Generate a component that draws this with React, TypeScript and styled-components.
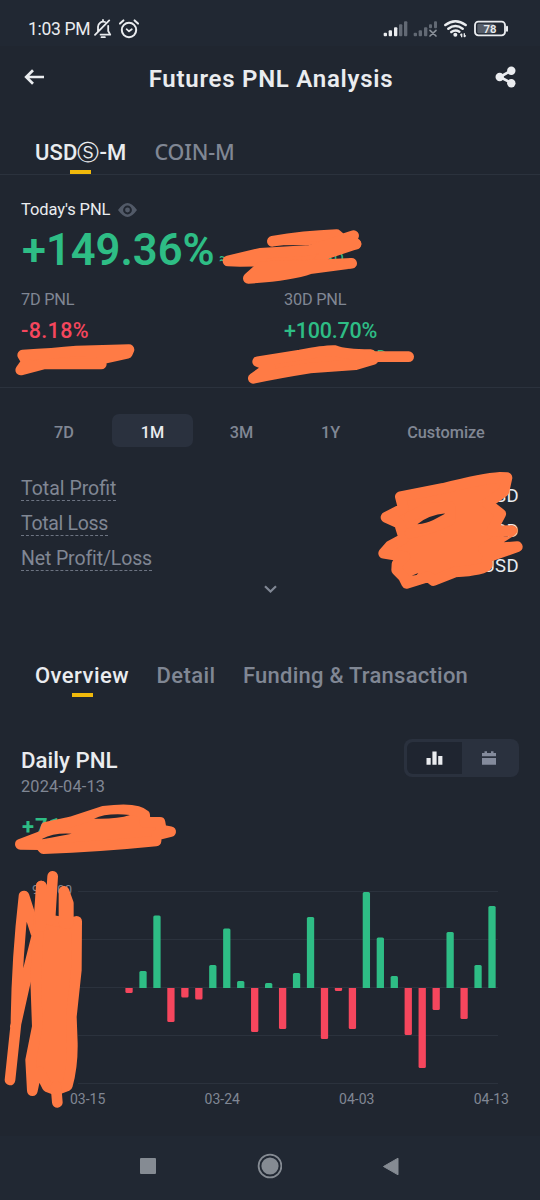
import React from "react";
import styled, { createGlobalStyle } from "styled-components";

const color = {
  bg: "#202630",
  system: "#212833",
  line: "#2b323d",
  text: "#eaecef",
  muted: "#808794",
  green: "#2ebd85",
  red: "#f6465d",
  yellow: "#f0b90b",
  panel: "#2a313e",
  marker: "#ff7b45",
};

const Global = createGlobalStyle`
  * { box-sizing: border-box; }
  body { margin: 0; background: ${color.bg}; }
`;

const Screen = styled.div`
  position: relative;
  width: 540px;
  height: 1200px;
  overflow: hidden;
  display: flex;
  flex-direction: column;
  background: ${color.bg};
  color: ${color.text};
  font-family: Roboto, "Noto Sans", sans-serif;
  white-space: nowrap;

  svg { display: block; flex: none; }
`;

const StatusBar = styled.div`
  height: 46px;
  padding: 12px 30px 0 28px;
  display: flex;
  align-items: center;
  justify-content: space-between;
  background: ${color.system};
`;

const StatusLeft = styled.div`
  display: flex;
  align-items: center;
  gap: 7px;
  font-size: 17.5px;
  letter-spacing: -0.3px;
  line-height: 22px;
`;

const Clock = styled.span`
  width: 59px;
`;

const Header = styled.header`
  height: 66px;
  padding: 0 24px 4px;
  display: flex;
  align-items: center;
  justify-content: space-between;
`;

const Title = styled.h1`
  margin: 0;
  padding: 3px 0 0 2px;
  font-size: 24px;
  font-weight: 600;
  letter-spacing: 0.74px;
`;

const TabBar = styled.nav<{ $top: number; $line?: boolean; $gap: number }>`
  display: flex;
  gap: ${(p) => p.$gap}px;
  padding: ${(p) => p.$top}px 0 0 35px;
  border-bottom: ${(p) => (p.$line ? `1px solid ${color.line}` : "0")};
`;

const TabItem = styled.div<{ $active?: boolean; $spacing: number; $wide?: boolean }>`
  display: flex;
  flex-direction: column;
  align-items: center;
  gap: 7px;
  font-family: ${(p) => (p.$wide ? '"Noto Sans", sans-serif' : "inherit")};
  font-size: ${(p) => (p.$wide ? 21.5 : 22)}px;
  font-weight: 500;
  line-height: ${(p) => (p.$wide ? 20 : 21)}px;
  letter-spacing: ${(p) => p.$spacing}px;
  color: ${(p) => (p.$active ? color.text : color.muted)};

  &::after {
    content: "";
    width: 21px;
    height: 4px;
    background: ${(p) => (p.$active ? color.yellow : "transparent")};
  }
`;

const Summary = styled.section`
  height: 213px;
  padding: 25px 21px 0;
  border-bottom: 1px solid ${color.line};
`;

const TodayLabel = styled.div`
  display: flex;
  align-items: center;
  gap: 8px;
  font-size: 16.5px;
  line-height: 20px;
  letter-spacing: -0.1px;
`;

const TodayRow = styled.div`
  display: flex;
  align-items: center;
  height: 56px;
  margin-top: 2px;
  color: ${color.green};
`;

const TodayPercent = styled.span`
  width: 198px;
  padding-left: 1px;
  font-size: 43.5px;
  font-weight: 600;
  letter-spacing: 0;
`;

const TodayAmount = styled.span`
  width: 125px;
  padding-top: 17px;
  display: flex;
  justify-content: space-between;
  font-size: 16px;
`;

const PeriodGrid = styled.div`
  display: grid;
  grid-template-columns: 263px 1fr;
  margin-top: 12px;
`;

const PeriodLabel = styled.div`
  font-size: 16.3px;
  line-height: 20px;
  letter-spacing: -0.2px;
  color: ${color.muted};
`;

const PeriodPercent = styled.div<{ $tone: string; $spacing: number }>`
  margin-top: 9px;
  font-size: 21.5px;
  font-weight: 500;
  line-height: 24px;
  letter-spacing: ${(p) => p.$spacing}px;
  color: ${(p) => p.$tone};
`;

const PeriodAmount = styled.div`
  margin-top: 4px;
  width: 103px;
  text-align: right;
  font-size: 16px;
  line-height: 19px;
  color: ${color.green};
`;

const RangeRow = styled.div`
  display: grid;
  grid-template-columns: 80px 81px 81px 81px 134px;
  gap: 8px;
  margin: 26px 0 0 24px;
`;

const Range = styled.div<{ $active?: boolean }>`
  height: 33px;
  padding-top: 3px;
  border-radius: 7px;
  text-align: center;
  font-size: 16.3px;
  font-weight: 500;
  line-height: 31px;
  background: ${(p) => (p.$active ? color.panel : "transparent")};
  color: ${(p) => (p.$active ? color.text : color.muted)};
`;

const Totals = styled.section`
  margin-top: 24px;
  padding: 0 21px;
`;

const TotalRow = styled.div`
  display: flex;
  justify-content: space-between;
  align-items: flex-start;
  height: 35px;
  padding-top: 7px;
  font-size: 19.5px;
  line-height: 22px;
`;

const TotalLabel = styled.span<{ $spacing: number }>`
  border-bottom: 1px dashed #6d7482;
  letter-spacing: ${(p) => p.$spacing}px;
  color: ${color.muted};
`;

const TotalValue = styled.span`
  margin-top: 7px;
  font-size: 18.5px;
  letter-spacing: 0.4px;
`;

const Expand = styled.div`
  display: flex;
  justify-content: center;
  padding-top: 9px;
  height: 24px;
`;

const DailyHead = styled.section`
  display: flex;
  justify-content: space-between;
  align-items: flex-start;
  margin-top: 42px;
  padding: 0 21px;
`;

const DailyTitle = styled.h2`
  margin: 8px 0 0;
  font-size: 22.3px;
  font-weight: 500;
  line-height: 26px;
`;

const DailyDate = styled.div`
  margin-top: 4px;
  font-size: 16.3px;
  line-height: 20px;
  letter-spacing: 0.2px;
  color: ${color.muted};
`;

const DailyValue = styled.div`
  margin-top: 17px;
  padding-left: 1px;
  font-size: 22px;
  font-weight: 700;
  line-height: 26px;
  letter-spacing: 1px;
  color: ${color.green};
`;

const Toggle = styled.div`
  display: grid;
  grid-template-columns: 1fr 1fr;
  width: 115px;
  height: 38px;
  padding: 3px;
  border-radius: 8px;
  background: ${color.panel};
`;

const ToggleSide = styled.div<{ $active?: boolean }>`
  display: flex;
  align-items: center;
  justify-content: center;
  border-radius: 6px 0 0 6px;
  background: ${(p) => (p.$active ? "#1f2530" : "transparent")};
`;

const Chart = styled.section`
  position: relative;
  margin-top: 40px;
`;

const TopTick = styled.span`
  position: absolute;
  left: 32px;
  top: 2px;
  font-size: 13px;
  line-height: 16px;
  color: ${color.muted};
`;

const AxisLabels = styled.div`
  display: flex;
  justify-content: space-between;
  padding: 1px 31px 0 70px;
  font-size: 14px;
  line-height: 17px;
  color: ${color.muted};
`;

const SystemNav = styled.footer`
  margin-top: auto;
  height: 64px;
  padding: 0 141px 4px 140px;
  display: flex;
  align-items: center;
  justify-content: space-between;
  background: ${color.system};
`;

const MarkerLayer = styled.svg`
  position: absolute;
  inset: 0;
  fill: ${color.marker};
  stroke: ${color.marker};
  stroke-width: 32;
  stroke-linecap: round;
  stroke-linejoin: round;
`;

const BellOff = () => (
  <svg width="18" height="20" viewBox="0 0 18 20" fill="none" stroke={color.text} strokeWidth="1.8" strokeLinecap="round" strokeLinejoin="round">
    <path d="M4 12.5V8a5.2 5.2 0 0 1 7-5M14.2 6.8V12l2 3.6H6.5M7.5 18.2h3.4M15.2 1.4 1 15.8" />
    <path d="M9 1v1" />
  </svg>
);

const Alarm = () => (
  <svg width="20" height="20" viewBox="0 0 20 20" fill="none" stroke={color.text} strokeWidth="2" strokeLinecap="round" strokeLinejoin="round">
    <circle cx="10" cy="11" r="7.2" />
    <path d="M1 4.6 4.4 1.4M19 4.6l-3.4-3.2" />
    <path d="M7.6 10.2 10 12.3l2.8-2.1" strokeWidth="1.7" />
  </svg>
);

const StatusIcons = () => (
  <svg width="128" height="22" viewBox="336 54 384 66">
    <g fill={color.text}>
      <rect x="341" y="98" width="10" height="11" rx="3" />
      <rect x="356" y="91" width="10" height="18" rx="3" />
      <rect x="372" y="82" width="10" height="27" rx="3" />
    </g>
    <g fill="#626974">
      <rect x="387" y="73" width="10" height="36" rx="3" />
      <rect x="402" y="64" width="10" height="45" rx="3" />
      <rect x="431" y="98" width="10" height="11" rx="3" />
      <rect x="446" y="91" width="10" height="18" rx="3" />
      <rect x="462" y="82" width="10" height="27" rx="3" />
      <rect x="477" y="73" width="9" height="12" rx="3" />
      <rect x="492" y="64" width="9" height="21" rx="3" />
    </g>
    <path d="m480 91 18 17m0-17-18 17" stroke="#8b919a" strokeWidth="5" strokeLinecap="round" />
    <g fill="none" stroke={color.text} strokeWidth="7.5" strokeLinecap="round">
      <path d="M526 75Q556 52 587 75M535 86Q556 70 578 86M544 96Q556 87 568 95" />
    </g>
    <circle cx="556" cy="104" r="6" fill={color.text} />
    <path d="M575 112v-11m-4 5 4-5M583 100v11m4-5-4 5" stroke={color.text} strokeWidth="4" fill="none" />
    <rect x="615" y="65" width="90" height="41" rx="10" fill="none" stroke={color.text} strokeWidth="5.5" />
    <rect x="622" y="71" width="50" height="29" rx="4" fill="#565d68" />
    <path d="M711 80v12" stroke={color.text} strokeWidth="6" strokeLinecap="round" />
    <text x="660" y="98" textAnchor="middle" fontSize="34" fontWeight="600" fill={color.text}>78</text>
  </svg>
);

const BackArrow = () => (
  <svg width="21" height="16" viewBox="0 0 21 16" fill="none" stroke={color.text} strokeWidth="2.7">
    <path d="M20 8H2.5M9 1.2 2.2 8 9 14.8" />
  </svg>
);

const Share = () => (
  <svg width="21" height="22" viewBox="0 0 21 22" fill={color.text} stroke={color.text}>
    <path d="m5 11 11.5-6.5M5 11l11.5 6" strokeWidth="2.6" />
    <circle cx="4.7" cy="11" r="4.2" stroke="none" />
    <circle cx="16.3" cy="4.8" r="4.2" stroke="none" />
    <circle cx="16.3" cy="17.2" r="4.2" stroke="none" />
  </svg>
);

const Eye = () => (
  <svg width="19" height="14" viewBox="0 0 19 14" fill="#525a68">
    <path fillRule="evenodd" d="M0 7Q5 0 9.500 0T19 7Q14 14 9.500 14T0 7ZM9.500 2.600a4.400 4.400 0 1 0 0 8.800a4.400 4.400 0 0 0 0-8.800Z" />
    <circle cx="9.5" cy="7" r="2.4" />
  </svg>
);

const BarsIcon = () => (
  <svg width="17" height="14" viewBox="0 0 17 14" fill={color.text}>
    <path d="M.5 7h4.200v6.800H.5zM6.400.5h4.200v13.300H6.400zM12.200 5h4.200v8.800h-4.200z" />
  </svg>
);

const CalendarIcon = () => (
  <svg width="14" height="14" viewBox="0 0 14 14" fill="#848b9c">
    <path d="M0 2h2.500V.3h2.500V2h4V.3h2.500V2H14v3.300H0zM0 7h14v6.800H0z" />
  </svg>
);

const daily = [
  -5, 17, 72.5, -34, -9.5, -11.5, 23, 59.5, 7, -44, 5, -41, 15, 71, -51, -3, -41,
  96, 50.5, 12, -47, -80, -22, 56, -31, 23, 82,
];

const bar = (value: number, x: number) => {
  const r = value > 0 ? 1.5 : -1.5;
  return `M${x} 108V${108 - value + r}q0 ${-r} 1.5 ${-r}h4.3q1.5 0 1.5 ${r}V108z`;
};

const DailyChart = () => (
  <svg width="540" height="210" viewBox="0 0 540 210">
    {[11.5, 59.5, 107.5, 155.5, 203.5].map((y) => (
      <path key={y} d={`M78 ${y}H498`} stroke={color.line} />
    ))}
    {daily.map((value, i) => (
      <path key={i} d={bar(value, 125.4 + i * 13.96)} fill={value > 0 ? color.green : color.red} />
    ))}
  </svg>
);

const Markers = () => (
  <MarkerLayer width="540" height="1200" viewBox="0 0 540 1200">
    <g transform="translate(210 190) scale(.33333)">
      <path d="M187 154Q280 138 380 134L385 154 300 165 200 166Z" stroke="none" />
      <path d="M187 154Q280 138 380 134L396 148 431 137M380 150 438 162" />
      <path d="M54 213 150 190 300 181 396 150 438 162 350 191Q330 206 320 222L160 230 154 213 90 214Z" />
      <path d="M154 230 115 265Q240 257 300 236L425 220 300 226Z" />
      <path d="M143 515 270 495Q350 480 375 482 400 493 482 494L490 508 437 524 300 534Q200 550 130 565L180 530Z" />
      <path d="M480 500H596" />
    </g>
    <g transform="translate(0 190) scale(.33333)">
      <path d="M68 495Q160 490 230 483L387 479 382 490 304 507 304 522H130L62 540 80 515Z" />
    </g>
    <g transform="translate(270 400) scale(.33333)">
      <path d="M391 290 520 265Q640 235 690 232L711 233 702 274 652 310 692 342 665 393 726 392 640 447 742 440 652 472V495Q645 510 555 516L490 542 475 530 410 550 400 530 380 510 381 492 405 470 341 460 360 438 402 415 388 370 348 352 400 325Z" />
      <path d="M442 373Q475 345 528 340L490 360Q470 370 442 373ZM425 527l20-8-5 6z" fill={color.bg} stroke="none" />
      <path d="M420 400Q480 390 540 360V320L470 325 420 350" fill="none" />
    </g>
    <g transform="translate(0 650) scale(.33333)">
      <path d="M61 583 132 556 138 532 212 516 310 484Q410 470 434 495L435 517H480L484 540 512 545 470 555 468 573Q300 590 130 596L120 584Z" />
      <path d="M127 566Q160 548 215 551 180 558 127 568ZM282 506Q320 488 390 495 350 508 282 506Z" fill={color.bg} stroke="none" />
    </g>
    <g transform="translate(0 860) scale(.33333)">
      <path d="M72 108Q50 300 48 490L30 660M46 500 75 370 110 230M72 108 108 220" fill="none" />
      <path d="M124 78 114 220 107 360 112 500 92 600 97 692 108 640 120 636 142 680 168 690 202 677Q218 620 217 550L214 470 229 330 230 184 205 190 150 180Z" />
      <path d="M124 78 122 200M158 49 150 180M192 94V190M192 94 205 130V190M168 680 172 727" fill="none" />
    </g>
  </MarkerLayer>
);

export default function App() {
  return (
    <Screen>
      <Global />
      <StatusBar>
        <StatusLeft>
          <Clock>1:03 PM</Clock>
          <BellOff />
          <Alarm />
        </StatusLeft>
        <StatusIcons />
      </StatusBar>

      <Header>
        <BackArrow />
        <Title>Futures PNL Analysis</Title>
        <Share />
      </Header>

      <TabBar $top={30} $gap={28} $line>
        <TabItem $active $spacing={0.1}>USDⓈ-M</TabItem>
        <TabItem $wide $spacing={-0.15}>COIN-M</TabItem>
      </TabBar>

      <Summary>
        <TodayLabel>
          Today's PNL
          <Eye />
        </TodayLabel>
        <TodayRow>
          <TodayPercent>+149.36%</TodayPercent>
          <TodayAmount>
            <span>≈</span>
            <span>USD</span>
          </TodayAmount>
        </TodayRow>
        <PeriodGrid>
          <div>
            <PeriodLabel>7D PNL</PeriodLabel>
            <PeriodPercent $tone={color.red} $spacing={0.37}>-8.18%</PeriodPercent>
          </div>
          <div>
            <PeriodLabel>30D PNL</PeriodLabel>
            <PeriodPercent $tone={color.green} $spacing={-0.2}>+100.70%</PeriodPercent>
            <PeriodAmount>USD</PeriodAmount>
          </div>
        </PeriodGrid>
      </Summary>

      <RangeRow>
        <Range>7D</Range>
        <Range $active>1M</Range>
        <Range>3M</Range>
        <Range>1Y</Range>
        <Range>Customize</Range>
      </RangeRow>

      <Totals>
        <TotalRow>
          <TotalLabel $spacing={0}>Total Profit</TotalLabel>
          <TotalValue>USD</TotalValue>
        </TotalRow>
        <TotalRow>
          <TotalLabel $spacing={-0.3}>Total Loss</TotalLabel>
          <TotalValue>USD</TotalValue>
        </TotalRow>
        <TotalRow>
          <TotalLabel $spacing={-0.13}>Net Profit/Loss</TotalLabel>
          <TotalValue>USD</TotalValue>
        </TotalRow>
      </Totals>
      <Expand>
        <svg width="13" height="8" viewBox="0 0 13 8" fill="none" stroke={color.muted} strokeWidth="2.2">
          <path d="m1 1.2 5.5 5.3L12 1.2" />
        </svg>
      </Expand>

      <TabBar $top={65} $gap={27.5}>
        <TabItem $active $spacing={0.46}>Overview</TabItem>
        <TabItem $spacing={0.4}>Detail</TabItem>
        <TabItem $spacing={0.24}>Funding &amp; Transaction</TabItem>
      </TabBar>

      <DailyHead>
        <div>
          <DailyTitle>Daily PNL</DailyTitle>
          <DailyDate>2024-04-13</DailyDate>
          <DailyValue>+71</DailyValue>
        </div>
        <Toggle>
          <ToggleSide $active>
            <BarsIcon />
          </ToggleSide>
          <ToggleSide>
            <CalendarIcon />
          </ToggleSide>
        </Toggle>
      </DailyHead>

      <Chart>
        <TopTick>900.00</TopTick>
        <DailyChart />
        <AxisLabels>
          <span>03-15</span>
          <span>03-24</span>
          <span>04-03</span>
          <span>04-13</span>
        </AxisLabels>
      </Chart>

      <SystemNav>
        <svg width="16" height="16">
          <rect width="16" height="16" rx="1" fill="#858b93" />
        </svg>
        <svg width="26" height="26" viewBox="-14 -13 26 26">
          <circle r="11.4" fill="none" stroke="#858b93" strokeWidth="1.8" />
          <circle r="8.6" fill="#858b93" />
        </svg>
        <svg width="17" height="19" viewBox="0 0 17 19">
          <path d="M1.5 9.5 16 1.2v16.600z" fill="#858b93" stroke="#858b93" strokeLinejoin="round" />
        </svg>
      </SystemNav>
      <Markers />
    </Screen>
  );
}
